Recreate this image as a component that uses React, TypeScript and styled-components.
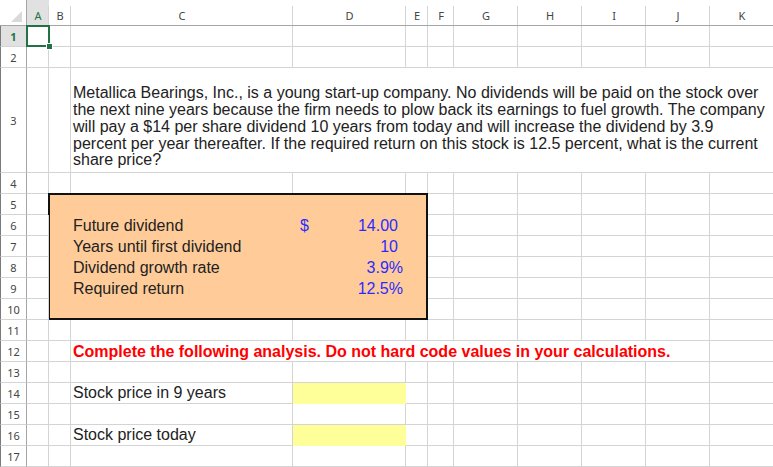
import React from 'react';
import styled, { createGlobalStyle, css } from 'styled-components';

const GlobalStyle = createGlobalStyle`
  html, body {
    margin: 0;
    padding: 0;
    background: #fff;
    overflow: hidden;
  }
  body {
    font-family: 'Liberation Sans', Arial, sans-serif;
  }
`;

const COLS = ['A', 'B', 'C', 'D', 'E', 'F', 'G', 'H', 'I', 'J', 'K'];
const COL_WIDTHS = [22, 22, 222, 113, 22, 26, 64, 64, 64, 64, 64];
const ROW_COUNT = 17;
const rowHeight = (r: number) => (r === 3 ? 105 : 21);

const GRID_LINE = '#d4d4d4';
const HEADER_LINE = '#a6a6a6';
const EXCEL_GREEN = '#217346';
const INPUT_BLUE = '#2b2bff';

type Merge = { row: number; col: number; rows: number; cols: number; kind: 'text' | 'warning' | 'box' };

// col index: A = 0
const MERGES: Merge[] = [
  { row: 3, col: 2, rows: 1, cols: 9, kind: 'text' },
  { row: 12, col: 2, rows: 1, cols: 8, kind: 'warning' },
  { row: 5, col: 1, rows: 6, cols: 4, kind: 'box' }
];

const PROBLEM =
  'Metallica Bearings, Inc., is a young start-up company. No dividends will be paid on the stock over the next nine years because the firm needs to plow back its earnings to fuel growth. The company will pay a $14 per share dividend 10 years from today and will increase the dividend by 3.9 percent per year thereafter. If the required return on this stock is 12.5 percent, what is the current share price?';

const WARNING = 'Complete the following analysis. Do not hard code values in your calculations.';

const INPUTS = [
  { row: 6, label: 'Future dividend', value: '14.00', dollar: true, percent: false },
  { row: 7, label: 'Years until first dividend', value: '10', dollar: false, percent: false },
  { row: 8, label: 'Dividend growth rate', value: '3.9%', dollar: false, percent: true },
  { row: 9, label: 'Required return', value: '12.5%', dollar: false, percent: true }
];

const LABELS: Record<string, string> = {
  C14: 'Stock price in 9 years',
  C16: 'Stock price today'
};

const FILLS: Record<string, string> = {
  D14: '#ffff99',
  D16: '#ffff99'
};

// sheet row r / column index c -> grid line (header row and row-number column come first)
type Place = { $r: number; $c: number; $rs?: number; $cs?: number };

const placed = css<Place>`
  grid-row: ${(p) => p.$r + 1} / span ${(p) => p.$rs ?? 1};
  grid-column: ${(p) => p.$c + 2} / span ${(p) => p.$cs ?? 1};
`;

const Sheet = styled.div`
  display: grid;
  grid-template-columns: 27px ${COL_WIDTHS.map((w) => `${w}px`).join(' ')};
  grid-template-rows: 26px ${Array.from({ length: ROW_COUNT }, (_, i) => `${rowHeight(i + 1)}px`).join(' ')};
  width: max-content;
`;

const Corner = styled.div`
  grid-row: 1;
  grid-column: 1;
  display: flex;
  align-items: flex-end;
  justify-content: flex-end;
  padding: 0 4px 3px 0;
  background: #fff;
  border-right: 1px solid ${HEADER_LINE};
  border-bottom: 1px solid ${HEADER_LINE};
`;

const ColHeader = styled.div<{ $c: number; $active?: boolean }>`
  grid-row: 1;
  grid-column: ${(p) => p.$c + 2};
  display: flex;
  align-items: center;
  justify-content: center;
  padding-top: 5px;
  font-family: 'Noto Sans', 'DejaVu Sans', sans-serif;
  font-size: 11px;
  color: ${(p) => (p.$active ? EXCEL_GREEN : '#444')};
  background:
    linear-gradient(${GRID_LINE}, ${GRID_LINE}) right 6px / 1px 100% no-repeat,
    ${(p) => (p.$active ? '#e1e1e1' : '#fff')};
  border-bottom: 1px solid ${HEADER_LINE};
`;

const RowHeader = styled.div<{ $r: number; $active?: boolean }>`
  grid-row: ${(p) => p.$r + 1};
  grid-column: 1;
  display: flex;
  align-items: center;
  justify-content: center;
  font-family: 'Noto Sans', 'DejaVu Sans', sans-serif;
  font-size: 11px;
  font-weight: ${(p) => (p.$active ? 700 : 400)};
  color: ${(p) => (p.$active ? EXCEL_GREEN : '#444')};
  background: ${(p) => (p.$active ? '#e1e1e1' : '#fff')};
  border-left: 1px solid #7a7a7a;
  border-right: 1px solid ${HEADER_LINE};
  border-bottom: 1px solid ${GRID_LINE};
`;

const Cell = styled.div<Place & { $fill?: string }>`
  ${placed};
  display: flex;
  align-items: center;
  min-width: 0;
  padding: 0 2px;
  font-size: 16px;
  color: #222;
  white-space: nowrap;
  background: ${(p) => p.$fill ?? '#fff'};
  border-right: 1px solid ${(p) => p.$fill ?? GRID_LINE};
  border-bottom: 1px solid ${(p) => p.$fill ?? GRID_LINE};
`;

const ProblemCell = styled(Cell)`
  align-items: flex-end;
  padding: 0 2px 3px 2px;
  white-space: normal;
  line-height: 16.75px;
`;

const WarningCell = styled(Cell)`
  padding-top: 2px;
  font-weight: 700;
  color: #ff0000;
`;

const InputBox = styled.div<Place>`
  ${placed};
  margin: -1px 0 0 -1px;
  background: #ffcc99;
  border: 2px solid #111;
`;

const BoxLabel = styled.div<Place>`
  ${placed};
  display: flex;
  align-items: center;
  padding: 0 2px;
  font-size: 16px;
  color: #222;
  white-space: nowrap;
`;

const BoxValue = styled.div<Place & { $percent?: boolean; $dollar?: boolean }>`
  ${placed};
  display: flex;
  align-items: center;
  justify-content: ${(p) => (p.$dollar ? 'space-between' : 'flex-end')};
  padding: 0 ${(p) => (p.$percent ? 3 : 8)}px 0 7px;
  font-size: 16px;
  color: ${INPUT_BLUE};
  white-space: nowrap;
`;

const Selection = styled.div<Place>`
  ${placed};
  position: relative;
  margin: -1px -1px 0 -1px;
  border: 2px solid ${EXCEL_GREEN};
`;

const FillHandle = styled.span`
  position: absolute;
  right: -5px;
  bottom: -5px;
  width: 5px;
  height: 5px;
  background: ${EXCEL_GREEN};
  border: 1px solid #fff;
`;

const cellName = (r: number, c: number) => `${COLS[c]}${r}`;

const findMerge = (r: number, c: number) =>
  MERGES.find((m) => r >= m.row && r < m.row + m.rows && c >= m.col && c < m.col + m.cols);

const CornerTriangle = () => (
  <svg width="11" height="11" viewBox="0 0 11 11">
    <polygon points="11,0 11,11 0,11" fill="#dadada" />
  </svg>
);

export default function App() {
  const cells: React.ReactNode[] = [];

  for (let r = 1; r <= ROW_COUNT; r++) {
    cells.push(
      <RowHeader key={`rh${r}`} $r={r} $active={r === 1}>
        {r}
      </RowHeader>
    );

    for (let c = 0; c < COLS.length; c++) {
      const merge = findMerge(r, c);
      const name = cellName(r, c);

      if (merge) {
        if (merge.row !== r || merge.col !== c) continue;
        const span = { $r: r, $c: c, $rs: merge.rows, $cs: merge.cols };
        if (merge.kind === 'text') {
          cells.push(
            <ProblemCell key={name} {...span}>
              {PROBLEM}
            </ProblemCell>
          );
        } else if (merge.kind === 'warning') {
          cells.push(
            <WarningCell key={name} {...span}>
              {WARNING}
            </WarningCell>
          );
        } else {
          cells.push(<InputBox key={name} {...span} />);
        }
        continue;
      }

      cells.push(
        <Cell key={name} $r={r} $c={c} $fill={FILLS[name]}>
          {LABELS[name]}
        </Cell>
      );
    }
  }

  return (
    <>
      <GlobalStyle />
      <Sheet>
        <Corner>
          <CornerTriangle />
        </Corner>
        {COLS.map((col, i) => (
          <ColHeader key={col} $c={i} $active={i === 0}>
            {col}
          </ColHeader>
        ))}
        {cells}
        {INPUTS.map((item) => (
          <React.Fragment key={item.row}>
            <BoxLabel $r={item.row} $c={2}>
              {item.label}
            </BoxLabel>
            <BoxValue $r={item.row} $c={3} $percent={item.percent} $dollar={item.dollar}>
              {item.dollar && <span>$</span>}
              <span>{item.value}</span>
            </BoxValue>
          </React.Fragment>
        ))}
        <Selection $r={1} $c={0}>
          <FillHandle />
        </Selection>
      </Sheet>
    </>
  );
}
